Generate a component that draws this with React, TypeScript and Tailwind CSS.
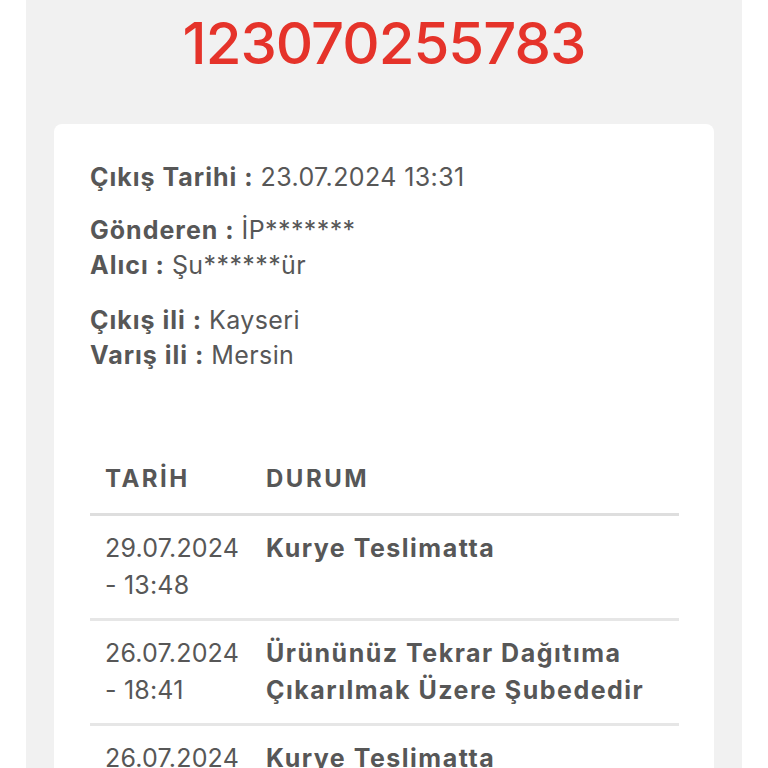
import React from 'react';

const rows = [
  { date: '29.07.2024', time: '- 13:48', status: ['Kurye Teslimatta'] },
  { date: '26.07.2024', time: '- 18:41', status: ['Ürününüz Tekrar Dağıtıma', 'Çıkarılmak Üzere Şubededir'] },
  { date: '26.07.2024', time: '- 14:02', status: ['Kurye Teslimatta'] },
];

const Info: React.FC<{ label: string; value: string }> = ({ label, value }) => (
  <div className="leading-[35px] whitespace-nowrap">
    <span className="font-bold tracking-[1px]">{label} : </span>
    <span className="tracking-[0.4px]">{value}</span>
  </div>
);

const App: React.FC = () => {
  return (
    <div
      className="h-[768px] overflow-hidden bg-white px-[26px] text-[#575757]"
      style={{ fontFamily: 'Inter, "Noto Sans", sans-serif' }}
    >
      <div className="min-h-[768px] bg-[#f1f1f1] px-[28px]">
        <h1 className="pt-[4px] text-center text-[58px] font-medium leading-[78px] tracking-[-1px] text-[#e5332a]">
          123070255783
        </h1>
        <div className="mt-[42px] rounded-lg bg-white px-[36px] pb-10 pt-[36px] text-[25px]">
          <Info label="Çıkış Tarihi" value="23.07.2024 13:31" />
          <div className="mt-[18px]">
            <Info label="Gönderen" value="İP*******" />
            <Info label="Alıcı" value="Şu******ür" />
          </div>
          <div className="mt-[20px]">
            <Info label="Çıkış ili" value="Kayseri" />
            <Info label="Varış ili" value="Mersin" />
          </div>
          <table className="mt-[71px] w-[589px] border-collapse text-left text-[25px]">
            <thead>
              <tr className="border-b-[3px] border-[#dedede] text-[24px]">
                <th className="w-[176px] py-[16px] pl-[15px] font-bold leading-[37px] tracking-[2.5px]">TARİH</th>
                <th className="py-[16px] font-bold leading-[37px] tracking-[2.5px]">DURUM</th>
              </tr>
            </thead>
            <tbody>
              {rows.map((r, i) => (
                <tr key={i} className="border-b-[3px] border-[#e6e6e6] align-top">
                  <td className="py-[14px] pl-[15px] leading-[37px] tracking-[0.2px]">
                    <div>{r.date}</div>
                    <div>{r.time}</div>
                  </td>
                  <td className="py-[14px] font-bold leading-[37px] tracking-[1.5px] whitespace-nowrap">
                    {r.status.map((s, j) => (
                      <div key={j}>{s}</div>
                    ))}
                  </td>
                </tr>
              ))}
            </tbody>
          </table>
        </div>
      </div>
    </div>
  );
};

export default App;
